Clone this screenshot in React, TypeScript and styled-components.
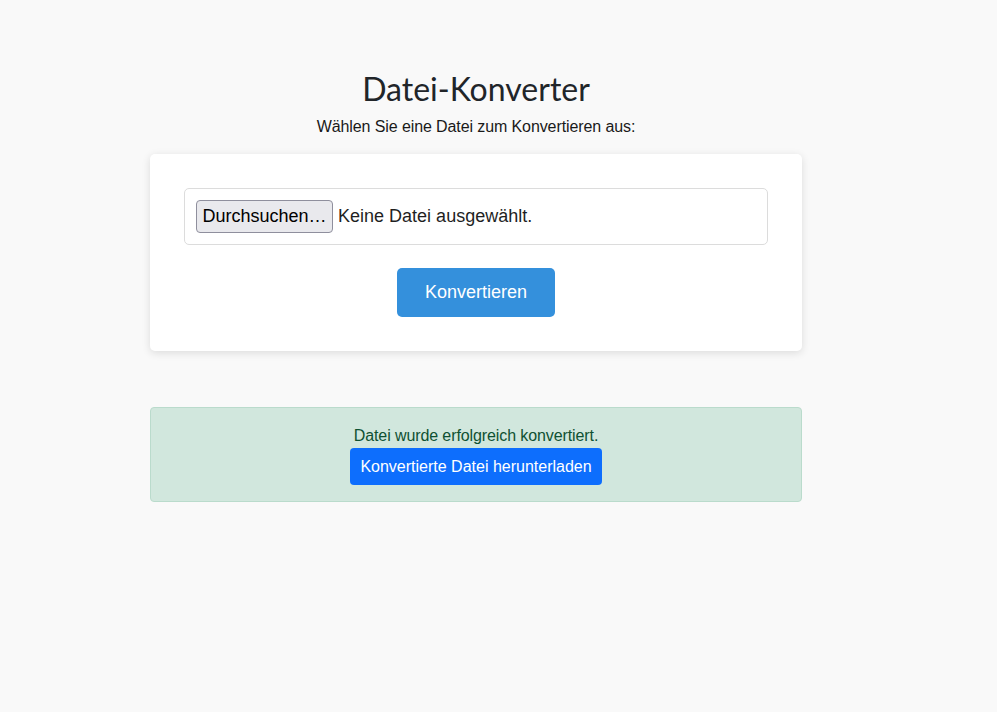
import React from "react";
import styled, { createGlobalStyle } from "styled-components";

const GlobalStyle = createGlobalStyle`
  html, body {
    margin: 0;
    padding: 0;
    background-color: #f9f9f9;
    font-family: "Liberation Sans", Arial, sans-serif;
    color: #212529;
  }
`;

const Page = styled.div`
  width: 652px;
  margin-left: 150px;
  padding-top: 68px;
  display: flex;
  flex-direction: column;
`;

const Title = styled.h1`
  margin: 0;
  font-family: Lato, "Liberation Sans", sans-serif;
  font-weight: 400;
  font-size: 32px;
  line-height: 42px;
  text-align: center;
  color: #212529;
`;

const Subtitle = styled.p`
  margin: 5px 0 0;
  font-size: 16px;
  letter-spacing: -0.1px;
  line-height: 24px;
  text-align: center;
  color: #1a1a1a;
`;

const Card = styled.div`
  margin-top: 15px;
  background: #fff;
  border-radius: 5px;
  box-shadow: 0 2px 8px rgba(0, 0, 0, 0.12);
  padding: 34px;
  display: flex;
  flex-direction: column;
  align-items: center;
  gap: 23px;
`;

const FileField = styled.label`
  align-self: stretch;
  display: flex;
  align-items: center;
  gap: 5px;
  padding: 11px;
  border: 1px solid #dcdcdc;
  border-radius: 5px;
  font-size: 18px;
  color: #1f1f1f;
`;

const FileButton = styled.span`
  display: inline-flex;
  align-items: center;
  height: 31px;
  padding: 0 5.5px;
  background: #e9e9ed;
  border: 1px solid #8f8f9d;
  border-radius: 4px;
  color: #000;
`;

const PrimaryButton = styled.button<{ $tone: "convert" | "download" }>`
  border: none;
  color: #fff;
  font-family: "Liberation Sans", Arial, sans-serif;
  cursor: pointer;
  background: ${p => (p.$tone === "convert" ? "#3490dc" : "#0d6efd")};
  border-radius: ${p => (p.$tone === "convert" ? "5px" : "4px")};
  font-size: ${p => (p.$tone === "convert" ? "18px" : "16px")};
  padding: ${p => (p.$tone === "convert" ? "13px 28px" : "7px 10.5px")};
  line-height: 23px;
`;

const Alert = styled.div`
  margin-top: 56px;
  background: #d1e7dd;
  border: 1px solid #badbcc;
  border-radius: 4px;
  color: #0f5132;
  padding: 16px;
  display: flex;
  flex-direction: column;
  align-items: center;
  font-size: 16px;
  letter-spacing: -0.1px;
  line-height: 24px;
`;

const App: React.FC = () => {
  return (
    <>
      <GlobalStyle />
      <Page>
        <Title>Datei-Konverter</Title>
        <Subtitle>Wählen Sie eine Datei zum Konvertieren aus:</Subtitle>
        <Card>
          <FileField>
            <FileButton>Durchsuchen…</FileButton>
            Keine Datei ausgewählt.
          </FileField>
          <PrimaryButton $tone="convert">Konvertieren</PrimaryButton>
        </Card>
        <Alert>
          Datei wurde erfolgreich konvertiert.
          <PrimaryButton $tone="download">
            Konvertierte Datei herunterladen
          </PrimaryButton>
        </Alert>
      </Page>
    </>
  );
};

export default App;
